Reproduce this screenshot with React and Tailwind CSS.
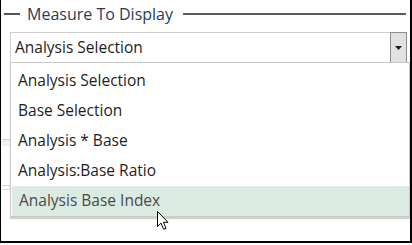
import { useState } from "react";

const options = [
  "Analysis Selection",
  "Base Selection",
  "Analysis * Base",
  "Analysis:Base Ratio",
  "Analysis Base Index",
];

function ArrowCursor() {
  return (
    <svg width="13" height="20" viewBox="0 0 13 20" className="block">
      <path
        d="M0.5 0.5 L0.5 15.5 L4 12.2 L6.6 18.3 L9 17.3 L6.5 11.3 L11 11.3 Z"
        fill="#fff"
        stroke="#000"
        strokeWidth="1"
        strokeLinejoin="miter"
      />
    </svg>
  );
}

export default function App() {
  const [selected] = useState(options[0]);
  const [hovered] = useState(4);

  return (
    <div className="relative h-[245px] w-[412px] overflow-hidden bg-white font-['Open_Sans',sans-serif]">
      <div className="relative h-[243px] border-b-2 border-l border-r-2 border-black pt-[3px]">
        {/* Group header */}

        <div className="flex h-[21px] items-center">
          <div className="ml-[3px] h-[2px] w-[16px] bg-[#555]" />
          <span className="ml-[7px] text-[16px] leading-none text-[#2d3b55]">
            Measure To Display
          </span>
          <div className="ml-[10px] mr-[4px] h-[2px] flex-1 bg-[#5c5c5c]" />
        </div>

        {/* Combo box */}

        <div className="ml-[9px] mr-[3px] mt-[8px] flex h-[31px]">
          <div className="flex flex-1 items-center border border-r-0 border-[#cfcfcf] pl-[4px] text-[15.5px] text-[#1e1e1e]">
            {selected}
          </div>
          <div className="flex w-[17px] items-center justify-center border border-[#8c8c8c] bg-[#e2e2e2]">
            <svg width="7" height="4" viewBox="0 0 7 4">
              <path d="M0 0 H7 L3.5 4 Z" fill="#1a1a1a" />
            </svg>
          </div>
        </div>

        {/* Controls hidden behind the popup */}

        <div className="ml-[1px] mt-[76px] h-[1px] w-[20px] bg-[#cfcfcf]" />
        <div className="ml-[1px] h-[6px] w-[20px] bg-[#f2f2f2]" />
        <div className="ml-[1px] mt-[39px] h-[1px] w-[20px] bg-[#cfcfcf]" />
        <div className="ml-[1px] mt-[3px] h-[1px] w-[20px] bg-[#dcdcdc]" />

        {/* Dropdown list */}

        <div className="absolute left-[9px] right-0 top-[62px] border border-[#c9c9c9] bg-white pt-[3px] shadow-[0_2px_1px_rgba(0,0,0,0.18)]">
          <ul>
            {options.map((option, i) => (
              <li
                key={option}
                className={`flex h-[30px] items-center pl-[7px] text-[15.5px] ${
                  i === hovered
                    ? "ml-[1px] bg-[#dcebe1] pl-[6px] text-[#4a4a4a]"
                    : "text-[#1e1e1e]"
                }`}
              >
                {option}
              </li>
            ))}
          </ul>
        </div>

        {/* Mouse pointer */}

        <div className="absolute left-[156px] top-[211px]">
          <ArrowCursor />
        </div>
      </div>
    </div>
  );
}
